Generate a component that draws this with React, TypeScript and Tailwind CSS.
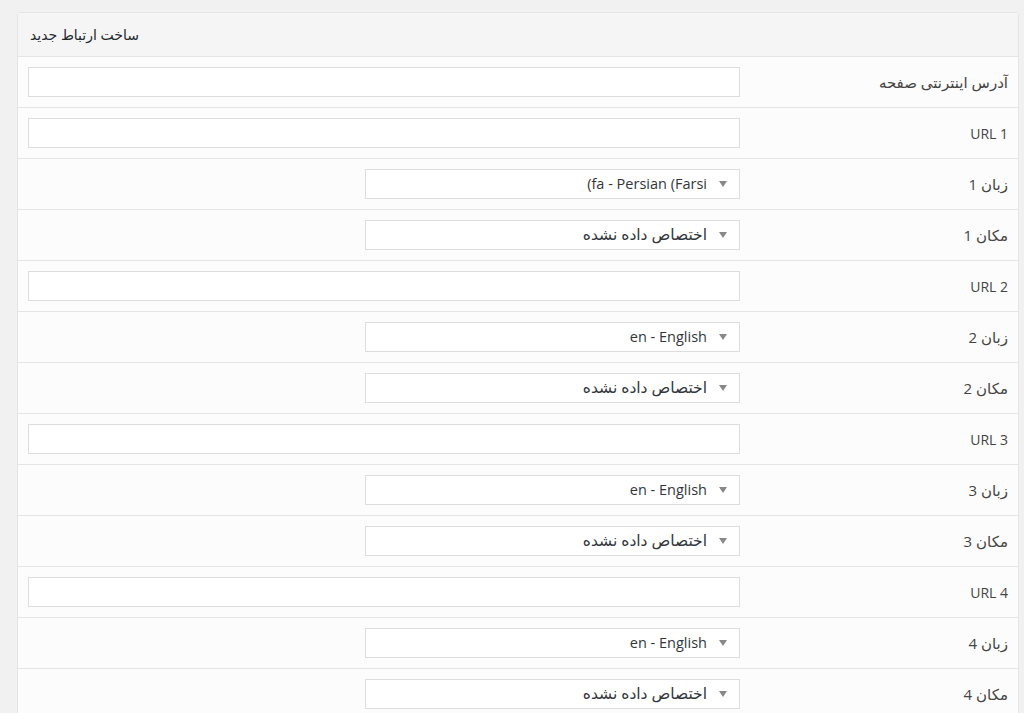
import React from "react";

type Row =
  | { label: string; kind: "input" }
  | { label: string; kind: "select"; value: string; ltr?: boolean };

const rows: Row[] = [
  { label: "آدرس اینترنتی صفحه", kind: "input" },
  { label: "URL 1", kind: "input" },
  { label: "زبان 1", kind: "select", value: "(fa - Persian (Farsi", ltr: true },
  { label: "مکان 1", kind: "select", value: "اختصاص داده نشده" },
  { label: "URL 2", kind: "input" },
  { label: "زبان 2", kind: "select", value: "en - English", ltr: true },
  { label: "مکان 2", kind: "select", value: "اختصاص داده نشده" },
  { label: "URL 3", kind: "input" },
  { label: "زبان 3", kind: "select", value: "en - English", ltr: true },
  { label: "مکان 3", kind: "select", value: "اختصاص داده نشده" },
  { label: "URL 4", kind: "input" },
  { label: "زبان 4", kind: "select", value: "en - English", ltr: true },
  { label: "مکان 4", kind: "select", value: "اختصاص داده نشده" },
];

const font = { fontFamily: '"Open Sans", "DejaVu Sans", sans-serif' };

export default function App() {
  return (
    <div className="min-h-[713px] bg-[#f1f1f1] pt-[12px] pl-[17px] pr-[5px]" style={font}>
      <div className="w-[1002px] border border-[#e5e5e5] rounded-t-[3px] bg-[#fcfcfc]">
        <div className="h-[44px] bg-[#f5f5f5] border-b border-[#e5e5e5] flex items-center pl-[12px]">
          <span dir="rtl" className="text-[14px] font-normal text-[#23282d]">
            ساخت ارتباط جدید
          </span>
        </div>
        {rows.map((r, i) => (
          <div key={i} dir="rtl" className="flex border-b border-[#e5e5e5] h-[51px]">
            <div
              className={
                r.label.startsWith("URL")
                  ? "w-[268px] shrink-0 flex items-center pr-[10px] text-[14px] text-[#444]"
                  : "w-[268px] shrink-0 flex items-center pr-[10px] text-[15px] text-[#444]"
              }
            >
              {r.label}
            </div>
            <div className="flex-1 flex items-center px-[10px]">
              {r.kind === "input" ? (
                <div className="w-[712px] h-[30px] bg-white border border-[#dddddd]" />
              ) : (
                <div className="w-[375px] h-[30px] bg-white border border-[#dddddd] flex items-center pr-[12px] text-[#32373c]">
                  <svg width="8" height="6" viewBox="0 0 8 6" className="shrink-0">
                    <path d="M0 0 L8 0 L4 6 Z" fill="#888" />
                  </svg>
                  {r.ltr ? (
                    <span dir="ltr" className="mr-[12px] whitespace-nowrap text-[14.5px]">
                      {r.value}
                    </span>
                  ) : (
                    <span className="mr-[12px] whitespace-nowrap text-[15.5px]">{r.value}</span>
                  )}
                </div>
              )}
            </div>
          </div>
        ))}
      </div>
    </div>
  );
}
